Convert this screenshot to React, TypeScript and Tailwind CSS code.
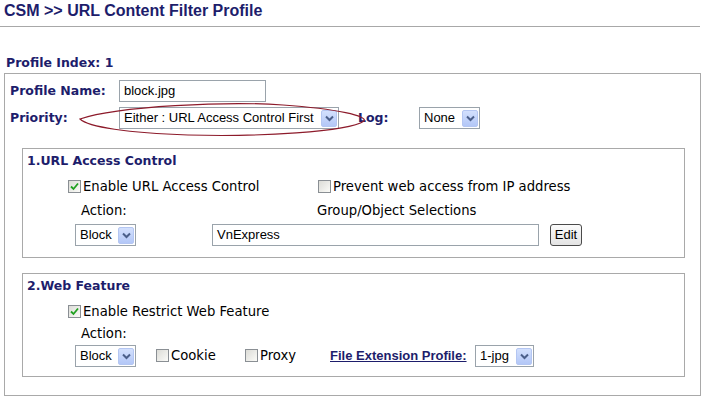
import React from "react";

const navy = "text-[#1d1d6b]";

const Arrow = () => (
  <span className="ml-auto mr-[1px] flex h-[17px] w-[16px] items-center justify-center rounded-[2px] border border-[#b4c6f2] bg-gradient-to-b from-[#d3e0fd] to-[#b3c7f7]">
    <svg width="9" height="7" viewBox="0 0 9 7">
      <path d="M1 1.5 L4.5 5 L8 1.5" fill="none" stroke="#4b5f8a" strokeWidth="2" />
    </svg>
  </span>
);

const Select = ({ value, w }: { value: string; w: string }) => (
  <div
    className={`flex h-[22px] ${w} shrink-0 items-center border border-[#9aa3ab] bg-white pl-[4px] font-['Liberation_Sans'] text-[13px] text-black`}
  >
    <span className="whitespace-nowrap">{value}</span>
    <Arrow />
  </div>
);

const Check = ({ checked }: { checked?: boolean }) => (
  <span className="flex h-[13px] w-[13px] shrink-0 items-center justify-center border border-[#8a8f94] bg-gradient-to-br from-[#dcdcd7] to-[#fbfbf8]">
    {checked && (
      <svg width="9" height="9" viewBox="0 0 9 9">
        <path d="M1 4.5 L3.5 7 L8 1.5" fill="none" stroke="#21a121" strokeWidth="1.8" />
      </svg>
    )}
  </span>
);

export default function App() {
  return (
    <div className="h-[403px] w-[705px] overflow-hidden bg-white font-['DejaVu_Sans'] text-[13.2px] text-black">
      {/* Title */}
      <h1 className={`h-[26px] pl-[4px] pt-[1px] font-['Liberation_Sans'] text-[16px] font-bold leading-[20px] ${navy}`}>
        CSM &gt;&gt; URL Content Filter Profile
      </h1>
      <div className="h-px w-[700px] bg-[#a8a8a8]" />

      <div className={`mt-[28px] h-[16px] pl-[6px] text-[12.5px] font-bold leading-[16px] ${navy}`}>Profile Index: 1</div>

      {/* Outer box */}
      <div className="relative mt-[2px] ml-[4px] h-[323px] w-[697px] border border-[#a9a9a9] pt-[6px] pl-[5px]">
        <div className="flex h-[22px] items-center">
          <span className={`w-[109px] text-[12.5px] font-bold ${navy}`}>Profile Name:</span>
          <div className="flex h-[22px] w-[147px] items-center border border-[#9aa3ab] pl-[4px] font-['Liberation_Sans'] text-[13px]">
            block.jpg
          </div>
        </div>
        <div className="mt-[5px] flex h-[22px] items-center">
          <span className={`w-[109px] text-[12.5px] font-bold ${navy}`}>Priority:</span>
          <Select value="Either : URL Access Control First" w="w-[220px]" />
          <span className={`ml-[19px] w-[61px] text-[12.5px] font-bold ${navy}`}>Log:</span>
          <Select value="None" w="w-[61px]" />
        </div>

        {/* 1.URL Access Control */}
        <div className="mt-[19px] ml-[12px] h-[110px] w-[663px] border border-[#a9a9a9]">
          <div className={`flex h-[25px] items-center pl-[4px] text-[12.5px] font-bold ${navy}`}>1.URL Access Control</div>
          <div className="flex h-[25px] items-center pl-[45px]">
            <div className="flex w-[250px] items-center gap-[2px]">
              <Check checked />
              <span>Enable URL Access Control</span>
            </div>
            <div className="flex items-center gap-[2px]">
              <Check />
              <span>Prevent web access from IP address</span>
            </div>
          </div>
          <div className="flex h-[23px] items-center pl-[58px]">
            <span className="w-[236px]">Action:</span>
            <span>Group/Object Selections</span>
          </div>
          <div className="mt-[2px] flex h-[22px] items-center pl-[52px]">
            <Select value="Block" w="w-[61px]" />
            <div className="ml-[76px] flex h-[22px] w-[327px] items-center border border-[#9aa3ab] pl-[4px] font-['Liberation_Sans'] text-[13px]">
              VnExpress
            </div>
            <button className="ml-[11px] h-[22px] w-[32px] rounded-[3px] border border-[#4a4a4a] bg-gradient-to-b from-[#fbfbfb] to-[#e3e3e3] font-['Liberation_Sans'] text-[13px]">
              Edit
            </button>
          </div>
        </div>

        {/* 2.Web Feature */}
        <div className="mt-[15px] ml-[12px] h-[104px] w-[663px] border border-[#a9a9a9]">
          <div className={`flex h-[25px] items-center pl-[4px] text-[12.5px] font-bold ${navy}`}>2.Web Feature</div>
          <div className="flex h-[25px] items-center gap-[2px] pl-[45px]">
            <Check checked />
            <span>Enable Restrict Web Feature</span>
          </div>
          <div className="flex h-[19px] items-center pl-[58px]">Action:</div>
          <div className="mt-[2px] flex h-[22px] items-center pl-[52px]">
            <Select value="Block" w="w-[61px]" />
            <div className="ml-[20px] flex w-[89px] items-center gap-[2px]">
              <Check />
              <span>Cookie</span>
            </div>
            <div className="flex w-[85px] items-center gap-[2px]">
              <Check />
              <span>Proxy</span>
            </div>
            <a className={`w-[145px] font-['Liberation_Sans'] text-[13px] font-bold underline ${navy}`}>File Extension Profile:</a>
            <Select value="1-jpg" w="w-[59px]" />
          </div>
        </div>

        {/* hand-drawn highlight round the priority select */}
        <svg className="pointer-events-none absolute left-[73px] top-[28px]" width="290" height="36" viewBox="0 0 290 36">
          <path
            d="M2 17 C 40 4, 150 -1, 205 3 C 260 7, 290 14, 286 19 C 270 30, 180 35, 110 33 C 50 31, 10 25, 2 17 Z"
            fill="none"
            stroke="#8d1b2b"
            strokeWidth="1.2"
          />
        </svg>
      </div>
    </div>
  );
}
